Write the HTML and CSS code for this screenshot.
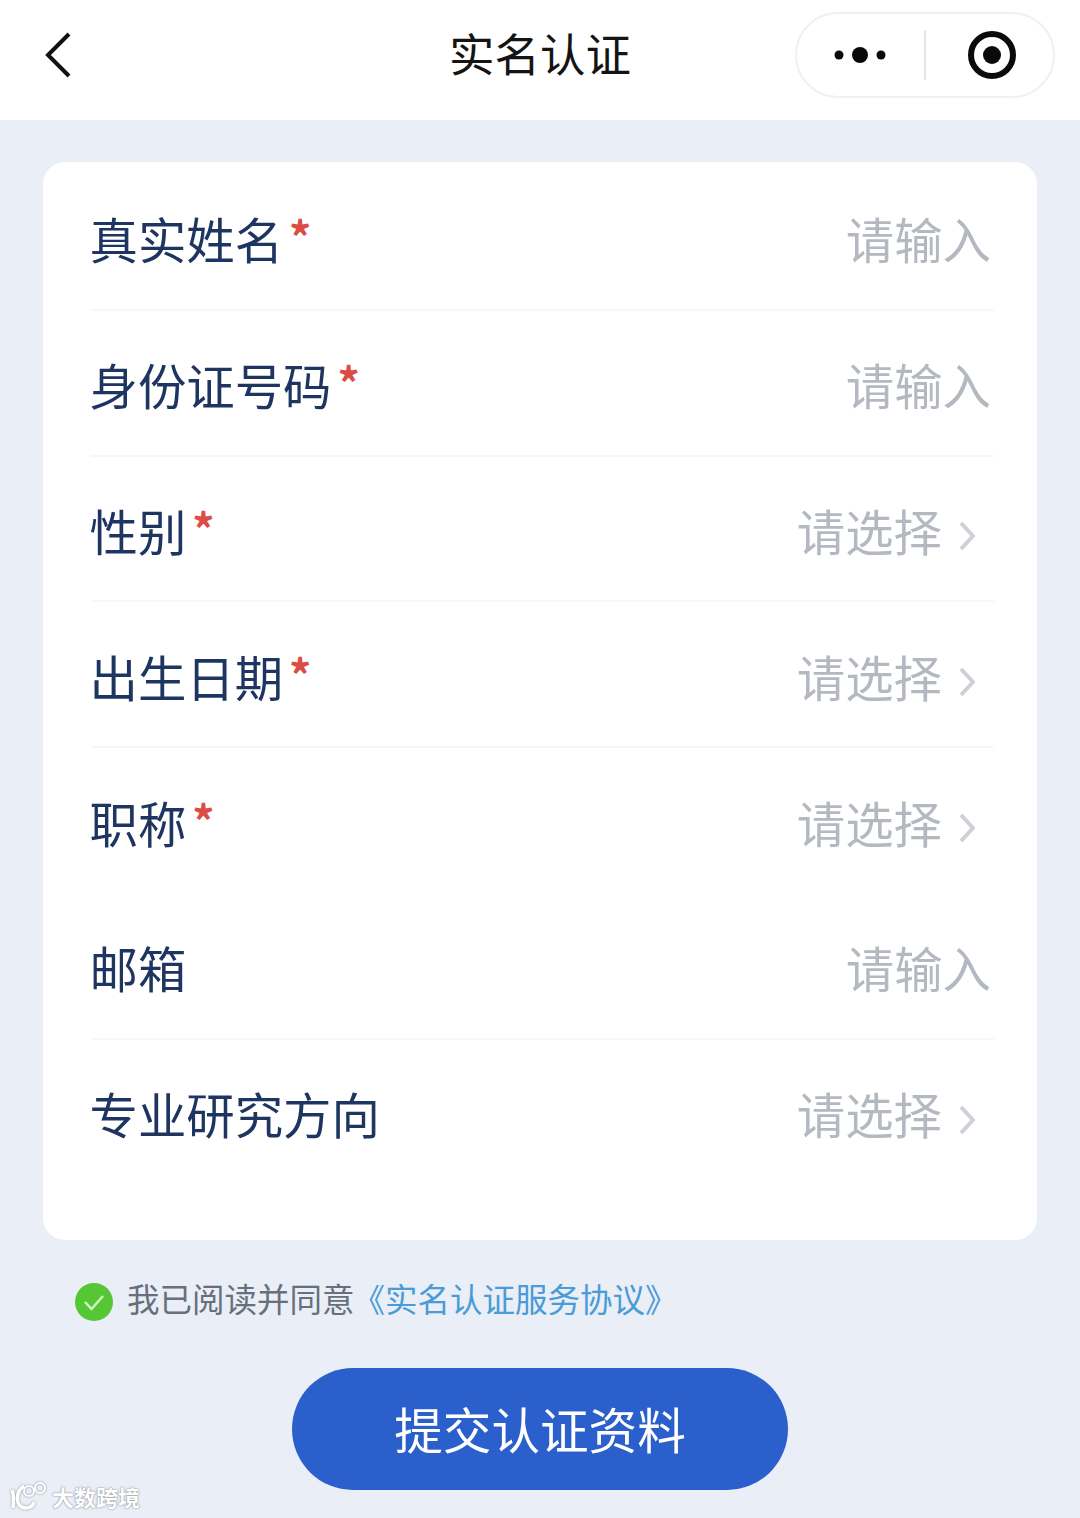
FILE: index.html
```html
<!DOCTYPE html>
<html lang="zh-CN">
<head>
  <meta charset="UTF-8">
  <meta name="viewport" content="width=device-width, initial-scale=1.0">
  <title>实名认证</title>
  <link rel="stylesheet" href="styles.css">
</head>
<body>
  <div class="page">
    <header class="nav-bar">
      <svg class="back-icon" width="30" height="48" viewBox="0 0 30 48">
        <path d="M25 3 L4 24 L25 45" fill="none" stroke="#111" stroke-width="4"/>
      </svg>
      <div class="nav-title">实名认证</div>
      <div class="capsule">
        <svg class="more-icon" width="54" height="20" viewBox="0 0 54 20">
          <circle cx="5" cy="10" r="4.5" fill="#0a0a0a"/>
          <circle cx="26" cy="10" r="8" fill="#0a0a0a"/>
          <circle cx="47" cy="10" r="4.5" fill="#0a0a0a"/>
        </svg>
        <div class="capsule-line"></div>
        <svg class="target-icon" width="48" height="48" viewBox="0 0 48 48">
          <circle cx="24" cy="24" r="21" fill="none" stroke="#0a0a0a" stroke-width="6"/>
          <circle cx="24" cy="24" r="9" fill="#0a0a0a"/>
        </svg>
      </div>
    </header>

    <div class="form-card">
      <div class="form-row">
        <div class="label">真实姓名<span class="required">*</span></div>
        <div class="value">请输入</div>
      </div>
      <div class="form-row">
        <div class="label">身份证号码<span class="required">*</span></div>
        <div class="value">请输入</div>
      </div>
      <div class="form-row">
        <div class="label">性别<span class="required">*</span></div>
        <div class="value has-arrow">请选择<svg class="arrow" width="16" height="30" viewBox="0 0 16 30"><path d="M2 2 L14 15 L2 28" fill="none" stroke="#cdd1d6" stroke-width="4"/></svg></div>
      </div>
      <div class="form-row">
        <div class="label">出生日期<span class="required">*</span></div>
        <div class="value has-arrow">请选择<svg class="arrow" width="16" height="30" viewBox="0 0 16 30"><path d="M2 2 L14 15 L2 28" fill="none" stroke="#cdd1d6" stroke-width="4"/></svg></div>
      </div>
      <div class="form-row no-line">
        <div class="label">职称<span class="required">*</span></div>
        <div class="value has-arrow">请选择<svg class="arrow" width="16" height="30" viewBox="0 0 16 30"><path d="M2 2 L14 15 L2 28" fill="none" stroke="#cdd1d6" stroke-width="4"/></svg></div>
      </div>
      <div class="form-row">
        <div class="label">邮箱</div>
        <div class="value">请输入</div>
      </div>
      <div class="form-row no-line">
        <div class="label">专业研究方向</div>
        <div class="value has-arrow">请选择<svg class="arrow" width="16" height="30" viewBox="0 0 16 30"><path d="M2 2 L14 15 L2 28" fill="none" stroke="#cdd1d6" stroke-width="4"/></svg></div>
      </div>
    </div>

    <div class="agree">
      <svg class="check" width="38" height="38" viewBox="0 0 38 38">
        <circle cx="19" cy="19" r="19" fill="#55c634"/>
        <path d="M10 19 L16.5 26 L28 13" fill="none" stroke="#d5f5c8" stroke-width="2.5"/>
      </svg>
      <span class="agree-text">我已阅读并同意</span>
      <span class="agree-link">《实名认证服务协议》</span>
    </div>

    <div class="submit-btn">提交认证资料</div>

    <div class="watermark">
      <svg class="watermark-logo" width="40" height="30" viewBox="0 0 40 30">
        <path d="M3 9 C5 14 5 20 4 27 M15 5 C6 11 6 26 16 27 C21 27 24 25 25 21" fill="none" stroke="#fff" stroke-width="3.5"/>
        <circle cx="20" cy="10" r="5" fill="none" stroke="#fff" stroke-width="2"/>
        <circle cx="31" cy="7" r="5" fill="none" stroke="#fff" stroke-width="2"/>
      </svg>
      <span>大数跨境</span>
    </div>
  </div>
</body>
</html>
```

FILE: styles.css
```css
* {
  box-sizing: border-box;
}

body {
  margin: 0;
  background: #e9eef7;
  font-family: "Noto Sans CJK SC", "Liberation Sans", sans-serif;
}

.page {
  position: relative;
  height: 1518px;
  overflow: hidden;
}

.nav-bar {
  position: relative;
  display: flex;
  align-items: center;
  justify-content: space-between;
  height: 120px;
  padding: 0 25px 0 44px;
  background: #ffffff;
}

.back-icon {
  margin-top: -11px;
}

.nav-title {
  position: absolute;
  left: 0;
  right: 0;
  top: 24px;
  font-size: 45.5px;
  line-height: 56px;
  color: #141414;
  text-align: center;
}

.capsule {
  display: flex;
  align-items: center;
  width: 260px;
  height: 86px;
  margin-top: -11px;
  padding-left: 37px;
  background: #ffffff;
  border: 2px solid #f0f0f2;
  border-radius: 43px;
}

.capsule-line {
  width: 2px;
  height: 50px;
  margin-left: 36px;
  background: #e6e6e8;
}

.target-icon {
  margin-left: 42px;
}

.form-card {
  height: 1078px;
  margin: 42px 43px 0;
  padding: 3px 43px 0 48px;
  background: #ffffff;
  border-radius: 22px;
}

.form-row {
  display: flex;
  align-items: center;
  justify-content: space-between;
  height: 145.8px;
  padding-top: 3px;
  border-bottom: 2px solid #f6f7f9;
}

.form-row.no-line {
  border-bottom-color: transparent;
}

.label {
  margin-left: -1.5px;
  font-size: 48.4px;
  line-height: 60px;
  color: #1d3560;
}

.required {
  display: inline-block;
  margin-left: 6px;
  font-size: 44px;
  font-weight: 700;
  line-height: 40px;
  color: #dc4c46;
  vertical-align: 5px;
}

.value {
  display: flex;
  align-items: center;
  padding-right: 3px;
  font-size: 48.4px;
  line-height: 60px;
  color: #b4b9c1;
}

.value.has-arrow {
  padding-right: 19px;
}

.arrow {
  margin-left: 17px;
  margin-top: 13px;
}

.agree {
  display: flex;
  align-items: center;
  height: 40px;
  margin: 38px 0 0 75px;
  font-size: 32.5px;
  line-height: 40px;
}

.check {
  margin-top: 7px;
}

.agree-text {
  margin-left: 14px;
  color: #676f7c;
}

.agree-link {
  margin-left: -2px;
  color: #4a9bd6;
}

.submit-btn {
  width: 496px;
  height: 122px;
  margin: 50px auto 0;
  font-size: 48.6px;
  line-height: 120px;
  color: #ffffff;
  text-align: center;
  background: #2b5fcc;
  border-radius: 61px;
}

.watermark {
  position: absolute;
  left: 9px;
  bottom: 6px;
  display: flex;
  align-items: center;
  gap: 3px;
  font-size: 22px;
  font-weight: 700;
  color: #ffffff;
  text-shadow: 0 0 2px #8b8f96, 0 0 1px #8b8f96;
}

.watermark-logo {
  filter: drop-shadow(0 0 1px #8b8f96);
}
```
